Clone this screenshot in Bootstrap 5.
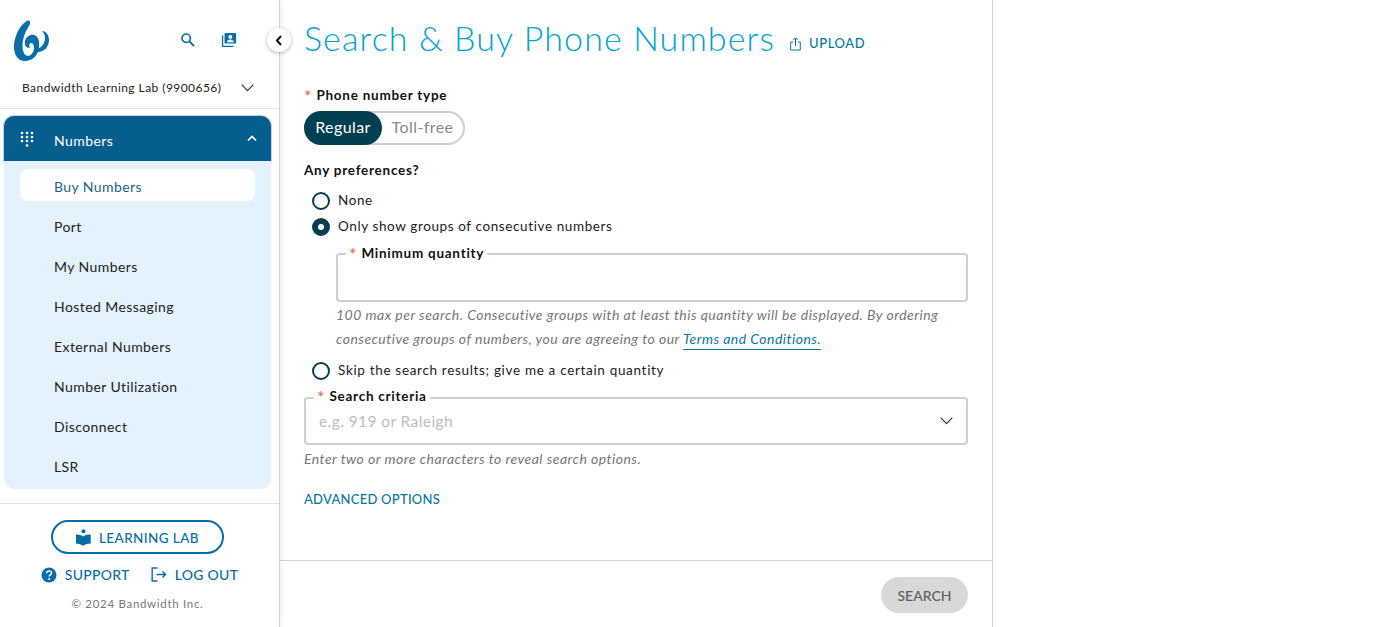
<!DOCTYPE html>
<html lang="en">
<head>
<meta charset="utf-8">
<title>Search & Buy Phone Numbers</title>
<link href="https://cdn.jsdelivr.net/npm/bootstrap@5.3.0/dist/css/bootstrap.min.css" rel="stylesheet">
<style>
html,body{height:627px;overflow:hidden;background:#fff;}
body{font-family:"Lato","Liberation Sans",sans-serif;font-size:14px;letter-spacing:.03em;color:#222;}
.shell{height:627px;width:993px;}
.side{width:280px;flex:none;border-right:1px solid #d4d4d4;box-shadow:2px 0 5px rgba(0,0,0,.06);position:relative;z-index:2;background:#fff;}
.side-top{height:109px;border-bottom:1px solid #e2e2e2;}
.brand-row{height:77px;padding:4px 0 0 14px;}
.logo-svg{width:35px;height:41px;display:block;}
.tool-search{margin-left:131px;margin-top:-1px;}
.tool-book{margin-left:25px;margin-top:-1px;}
.acct{font-size:12px;letter-spacing:.037em;padding-left:22px;padding-right:25px;height:22px;color:#222;}
.collapse-btn{position:absolute;left:267px;top:28px;width:24px;height:24px;border-radius:50%;background:#fff;box-shadow:0 1px 4px rgba(0,0,0,.3);border:0;padding:0;display:flex;align-items:center;justify-content:center;}
.nav-wrap{padding:7px 8px 0 4px;height:395px;border-bottom:1px solid #e2e2e2;}
.nav-panel{background:#e3f2fc;border-radius:0 0 10px 10px;height:328px;}
.nav-head{height:45px;background:#065e8f;border-radius:10px 10px 0 0;color:#fff;box-shadow:0 0 0 1px #b9d4e6;padding:0 14px 0 16px;}
.nav-head span{margin-left:20px;padding-top:4px;}
.nav-items{padding:8px 16px;margin:0;list-style:none;}
.nav-items li{height:32px;margin-bottom:8px;padding-left:34px;line-height:35px;color:#222;border-radius:8px;}
.nav-items li.on{background:#fff;color:#1d5f8a;}
.side-foot{padding:16px 4px 0 0;}
.lab-btn{width:173px;height:34px;border:2px solid #056ea8;border-radius:17px;color:#056ea8;background:#fff;font-size:13.5px;font-weight:500;padding:0;letter-spacing:.03em;}
.lab-text{padding-top:3px;}
.foot-link{color:#056ea8;font-size:14px;text-decoration:none;font-weight:500;letter-spacing:.02em;}
.foot-links{margin-top:10px;margin-left:4px;gap:21px;}
.copy{font-size:11.5px;letter-spacing:.06em;color:#777;margin-top:10px;text-align:center;}
.main{width:713px;flex:none;border-right:1px solid #d4d4d4;}
.content{padding:0 24px 0 24px;height:561px;border-bottom:1px solid #d4d4d4;}
.page-title{font-family:"Lato","Liberation Sans",sans-serif;font-weight:300;font-size:34px;color:#00a4d3;letter-spacing:1.1px;margin:0;line-height:1;}
.title-row{height:85px;padding-bottom:9px;}
.up-link{color:#05789d;font-size:13px;letter-spacing:.045em;text-decoration:none;margin-left:15px;margin-top:11px;font-weight:500;}
.req{color:#ef5a33;font-weight:400;font-size:18px;line-height:0;vertical-align:-3px;}
.lbl{font-weight:700;font-size:13.5px;letter-spacing:.055em;color:#111;}
.seg{width:161px;height:34px;border:2px solid #cfcfcf;border-radius:17px;margin-top:6px;font-size:16px;position:relative;}
.seg-on{background:#023f51;color:#fff;border-radius:17px;height:34px;width:79px;margin:-2px 0 0 -2px;padding-bottom:2px;}
.seg-off{color:#8a8a8a;width:82px;margin-top:-2px;height:34px;padding-bottom:2px;}
.pref{margin-top:15px;}
.radio-list{margin-top:7px;}
.radio-row{height:26px;margin-left:8px;font-size:13.5px;letter-spacing:.045em;}
.skip-row{margin-top:7px;letter-spacing:.05em;}
.dot{width:18px;height:18px;border:2px solid #023f51;border-radius:50%;flex:none;margin-right:8px;background:#fff;}
.dot.sel{background:#023f51;position:relative;}
.dot.sel::after{content:"";position:absolute;left:4px;top:4px;width:6px;height:6px;border-radius:50%;background:#fff;}
.fld{border:2px solid #cfcfcf;border-radius:4px;height:48px;position:relative;background:#fff;}
.fld-lbl{position:absolute;left:8px;top:-11px;background:#fff;padding:0 3px 0 3px;line-height:18px;}
.crit .fld-lbl{top:-12px;}
.min-wrap{margin:13px 0 0 32px;}
.min-wrap .fld{height:49px;}
.hint{font-style:italic;font-size:14px;letter-spacing:.47px;color:#767676;line-height:24px;}
.hint-a{margin-top:1px;}
.hint-b{margin-top:2px;}
.hint a{color:#05789d;text-decoration:none;border-bottom:1px solid #05789d;padding-bottom:2px;}
.crit{margin-top:13px;}
.ph{color:#bdbdbd;font-size:15.5px;padding:2px 0 0 13px;}
.adv{color:#05789d;text-decoration:none;font-size:13px;font-weight:500;display:inline-block;margin-top:19px;letter-spacing:.02em;}
.foot-bar{height:66px;padding:16px 24px 0 0;}
.search-btn{width:87px;height:36px;border-radius:18px;background:#d8d8d8;color:#5e5e5e;border:0;font-size:14px;padding:0;font-weight:500;}
.crit-arrow{margin-right:13px;}
</style>
</head>
<body>
<div class="d-flex shell">
  <aside class="side d-flex flex-column">
    <div class="side-top">
      <div class="d-flex align-items-center brand-row">
        <svg class="logo-svg" viewBox="0 0 35 41" aria-label="Bandwidth logo"><path fill="#0a6ea9" d="M14 .5C16 0 17 3 15 6 11 12 8.500 19 8.500 26 8.500 32 11 36 14 36 17 36 20 32 20 28 20 25 19 23 17 23 15 23 15 26 16 28 12 28 10 25 11 21 12 17 16 14 20 15 24 16 26 21 25 28 28 27 31 23 31 18 31 15 30 13 28 11 32 11 35 15 35 20 35 27 30 32 24 32 22 37 17 41 11 41 4 41 0 35 0 27 0 16 7 3 14 .5Z"/></svg>
        <svg class="tool-search" width="16" height="16" viewBox="0 0 16 16" fill="none" stroke="#0a6ea9" aria-label="Search"><circle cx="6.200" cy="6.200" r="4.200" stroke-width="1.700"/><path d="M9.500 9.500l4.600 4.600" stroke-width="2"/></svg>
        <svg class="tool-book" width="16" height="16" viewBox="0 0 18 18" aria-label="Contacts"><path fill="#0a6ea9" d="M5 1h11a1 1 0 0 1 1 1v10a1 1 0 0 1-1 1H5a1 1 0 0 1-1-1V2a1 1 0 0 1 1-1z"/><path fill="#0a6ea9" d="M1 4h1.500v11.500H14V17H2a1 1 0 0 1-1-1z"/><circle cx="10.500" cy="5.500" r="2.200" fill="#fff"/><path fill="#fff" d="M6.500 11.500c0-2 2.500-3 4-3s4 1 4 3z"/></svg>
      </div>
      <div class="acct d-flex align-items-center justify-content-between"><span>Bandwidth Learning Lab (9900656)</span>
        <svg width="13" height="8" viewBox="0 0 13 8" fill="none" stroke="#333" stroke-width="1.100"><path d="M.7.7l5.800 6 5.800-6"/></svg></div>
    </div>
    <button class="collapse-btn" aria-label="Collapse"><svg width="8" height="11" viewBox="0 0 8 11" fill="none" stroke="#111" stroke-width="2"><path d="M6 1L2 5.500 6 10"/></svg></button>
    <nav class="nav-wrap">
      <div class="nav-head d-flex align-items-center">
        <svg width="14" height="16" viewBox="0 0 14 16" fill="#fff"><circle cx="2" cy="2" r="1.300"/><circle cx="7" cy="2" r="1.300"/><circle cx="12" cy="2" r="1.300"/><circle cx="2" cy="6" r="1.300"/><circle cx="7" cy="6" r="1.300"/><circle cx="12" cy="6" r="1.300"/><circle cx="2" cy="10" r="1.300"/><circle cx="7" cy="10" r="1.300"/><circle cx="12" cy="10" r="1.300"/><circle cx="7" cy="14.500" r="1.300"/></svg>
        <span class="flex-grow-1">Numbers</span>
        <svg width="10" height="7" viewBox="0 0 10 7" fill="none" stroke="#fff" stroke-width="1.600"><path d="M1 5.500l4-4 4 4"/></svg>
      </div>
      <div class="nav-panel">
        <ul class="nav-items">
          <li class="on">Buy Numbers</li><li>Port</li><li>My Numbers</li><li>Hosted Messaging</li><li>External Numbers</li><li>Number Utilization</li><li>Disconnect</li><li>LSR</li>
        </ul>
      </div>
    </nav>
    <div class="side-foot d-flex flex-column align-items-center">
      <button class="lab-btn d-flex align-items-center justify-content-center gap-2">
        <svg width="15" height="17" viewBox="0 0 15 17" fill="#056ea8"><circle cx="7.500" cy="2.300" r="2"/><path d="M0 5.500c3 0 5.500.7 7 2 1.500-1.300 4-2 7-2h1v9c-3 0-6 .7-8 2.500-2-1.800-5-2.500-8-2.500V5.500z" transform="translate(.5 0) scale(.95 1)"/></svg>
        <span class="lab-text">LEARNING LAB</span></button>
      <div class="foot-links d-flex align-items-center">
        <a href="#" class="foot-link d-flex align-items-center gap-2"><svg width="16" height="16" viewBox="0 0 16 16"><circle cx="8" cy="8" r="7.500" fill="#056ea8"/><path d="M5.600 6.200C5.700 4.800 6.800 4 8 4c1.400 0 2.500.9 2.500 2.100 0 1.700-2.300 1.800-2.300 3.500" fill="none" stroke="#fff" stroke-width="1.700"/><circle cx="8.200" cy="12" r="1.100" fill="#fff"/></svg>SUPPORT</a>
        <a href="#" class="foot-link d-flex align-items-center gap-2"><svg width="16" height="15" viewBox="0 0 16 15" fill="none" stroke="#056ea8" stroke-width="1.400"><path d="M6.500 1H1.200v13h5.300M5.500 7.500h9M11.500 4.500l3 3-3 3"/></svg>LOG OUT</a>
      </div>
      <div class="copy">© 2024 Bandwidth Inc.</div>
    </div>
  </aside>
  <main class="main d-flex flex-column">
    <div class="content">
      <div class="title-row d-flex align-items-center">
        <h1 class="page-title">Search &amp; Buy Phone Numbers</h1>
        <a href="#" class="up-link d-flex align-items-center gap-2"><svg width="11" height="14" viewBox="0 0 11 14" fill="none" stroke="#05789d"><path d="M3 5H.7v8h9.600V5H8M5.500 9V1M3.300 3l2.200-2.200L7.700 3"/></svg>UPLOAD</a>
      </div>
      <div class="lbl"><span class="req">*</span> Phone number type</div>
      <div class="seg d-flex">
        <div class="seg-on d-flex align-items-center justify-content-center">Regular</div>
        <div class="seg-off d-flex align-items-center justify-content-center">Toll-free</div>
      </div>
      <div class="lbl pref">Any preferences?</div>
      <div class="radio-list">
        <div class="radio-row d-flex align-items-center"><span class="dot"></span>None</div>
        <div class="radio-row d-flex align-items-center"><span class="dot sel"></span>Only show groups of consecutive numbers</div>
      </div>
      <div class="min-wrap">
        <div class="fld"><div class="fld-lbl lbl"><span class="req">*</span> Minimum quantity</div></div>
        <div class="hint hint-a">100 max per search. Consecutive groups with at least this quantity will be displayed. By ordering consecutive groups of numbers, you are agreeing to our <a href="#">Terms and Conditions.</a></div>
      </div>
      <div class="radio-row skip-row d-flex align-items-center"><span class="dot"></span>Skip the search results; give me a certain quantity</div>
      <div class="fld crit d-flex align-items-center justify-content-between">
        <div class="fld-lbl lbl"><span class="req">*</span> Search criteria</div>
        <span class="ph">e.g. 919 or Raleigh</span>
        <svg class="crit-arrow" width="13" height="8" viewBox="0 0 13 8" fill="none" stroke="#333" stroke-width="1.100"><path d="M.7.7l5.800 6 5.800-6"/></svg>
      </div>
      <div class="hint hint-b">Enter two or more characters to reveal search options.</div>
      <a href="#" class="adv">ADVANCED OPTIONS</a>
    </div>
    <div class="foot-bar d-flex justify-content-end align-items-start"><button class="search-btn">SEARCH</button></div>
  </main>
</div>
<script src="https://cdn.jsdelivr.net/npm/bootstrap@5.3.0/dist/js/bootstrap.bundle.min.js"></script>
</body>
</html>
